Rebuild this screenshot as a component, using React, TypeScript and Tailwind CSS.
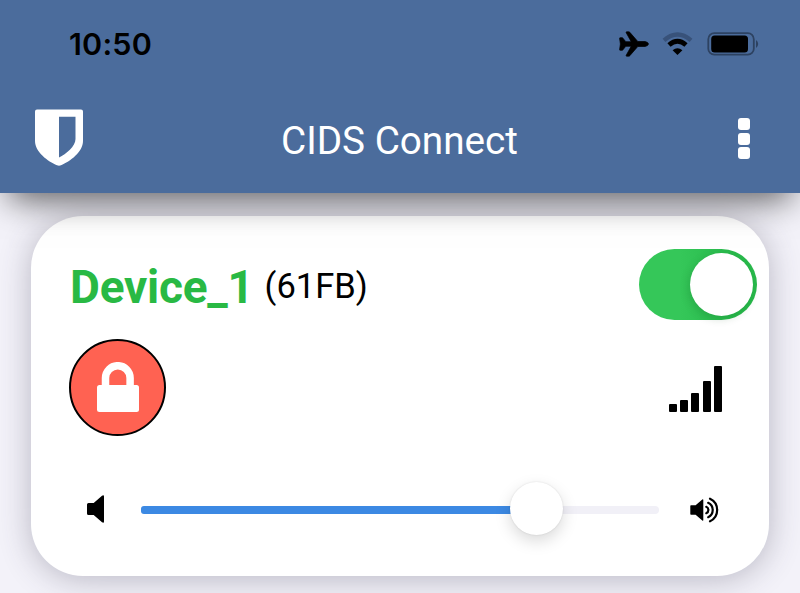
import React from "react";

function StatusBar() {
  return (
    <div className="flex h-[88px] items-center justify-between pl-[69px] pr-[41px]">
      <span className="font-['Inter',sans-serif] text-[30.5px] font-semibold leading-none tracking-[0.2px] text-black">10:50</span>
      <div className="flex items-center">
        <svg width="30" height="26" viewBox="0 0 30 26">
          <path d="M1.200 6.700h2.300l3.300 4h5.400L7.200 1.700Q6.800.8 7.700.8h2.100q.6 0 1 .5l8 9.200h7.200q3.300.6 3.500 2.500-.2 1.900-3.500 2.500h-7.200l-8 9.200q-.4.5-1 .5H7.700q-.9 0-.5-.9l5-9h-5.400l-3.300 4H1.200q-.7 0-.6-.7L1.400 13 .6 7.400q-.1-.7.600-.7z" stroke="#000" strokeWidth="0.7" strokeLinejoin="round" />
        </svg>
        <svg className="ml-[13px]" width="31" height="24" viewBox="0 0 31 24">
          <path d="M2 8.300Q15.500-3.300 29 8.300" fill="none" stroke="#38527a" strokeWidth="4.300" />
          <path d="M7 13Q15.500 5.600 24 13" fill="none" stroke="#000" strokeWidth="4.800" />
          <path d="M15.500 23l-4.900-4.700q4.900-4.200 9.800 0z" />
        </svg>
        <svg className="ml-[14px]" width="52" height="24" viewBox="0 0 52 24">
          <rect x="1.300" y="1.200" width="45.500" height="21.500" rx="6" fill="none" stroke="#2d4261" strokeWidth="1.800" />
          <rect x="4.200" y="3.600" width="36.800" height="16.800" rx="3.500" />
          <path d="M49 8q2.200 1.400 2.200 4T49 16z" fill="#2d4261" />
        </svg>
      </div>
    </div>
  );
}

function Header() {
  return (
    <header className="relative z-10 h-[193px] bg-[#4b6c9c] shadow-[0_16px_32px_-9px_rgba(0,0,0,0.62)]">
      <StatusBar />
      <div className="grid h-[99px] grid-cols-[1fr_auto_1fr] items-center pl-[35px] pr-[50px]">
        <svg width="48" height="57" viewBox="0 0 48 57">
          <path
            fill="#fff"
            fillRule="evenodd"
            d="M2 0.500h44q2 0 2 2v29.500c0 11-13 20.500-22 24.300q-2 .8-4 0C13 52.500 0 43 0 32V2.500Q0 .5 2 .5zM24 7.800v40.700C31 45 40.500 37.500 40.500 30V7.800z"
          />
        </svg>
        <h1 className="mr-[-14px] mt-[8px] font-['Roboto',sans-serif] text-[38.7px] leading-none text-white">CIDS Connect</h1>
        <div className="mt-[2px] flex w-3 flex-col items-center gap-[2.500px] justify-self-end">
          <span className="h-[12px] w-3 shrink-0 rounded-[3px] bg-white" />
          <span className="h-[12px] w-3 shrink-0 rounded-[3px] bg-white" />
          <span className="h-[12px] w-3 shrink-0 rounded-[3px] bg-white" />
        </div>
      </div>
    </header>
  );
}

function VolumeSlider() {
  return (
    <div className="mt-[46px] flex h-[54px] items-center pl-[55px]">
      <svg className="mt-[2px]" width="19" height="28" viewBox="0 0 19 28">
        <path d="M2.500 8h5.200L16 .7q2-1.200 2 .8v25q0 2-2 .8L7.700 20H2.500Q1 20 1 18.500v-9Q1 8 2.500 8z" />
      </svg>
      <div className="relative ml-[36px] mt-[3px] flex h-2 w-[518px] overflow-visible rounded-full bg-[#f1f0f7]">
        <div className="h-2 w-[396px] rounded-l-[3px] bg-[#3c89e3]" />
        <div className="absolute left-[369px] top-[-24px] h-[53px] w-[53px] rounded-full bg-white shadow-[0_6px_16px_rgba(0,0,0,0.15),0_0_2px_rgba(0,0,0,0.12)]" />
      </div>
      <svg className="ml-[31px] mt-[3px]" width="30" height="26" viewBox="0 0 30 26">
        <path d="M1 8.300h4.600l6.700-5.800q1-.6 1 .5v20q0 1.100-1 .5l-6.700-5.800H1q-.7 0-.7-.7V9q0-.7.7-.7z" />
        <g fill="none" stroke="#000" strokeWidth="2.200" strokeLinecap="round">
          <path d="M16.300 9.800a3.500 3.500 0 0 1 0 6.400" />
          <path d="M18.200 5.800a8 8 0 0 1 0 14.400" />
          <path d="M20 1.700a12.500 12.500 0 0 1 0 22.600" />
        </g>
      </svg>
    </div>
  );
}

function DeviceCard() {
  return (
    <section className="mx-[31px] mt-[23px] h-[360px] rounded-[52px] bg-white pt-[33px] shadow-[0_3px_32px_rgba(60,55,80,0.32)]">
      <div className="flex h-[71px] items-center justify-between pl-[39px] pr-3">
        <div className="flex items-start pt-[4px] font-['Roboto',sans-serif]">
          <span className="text-[46px] font-bold leading-[46px] tracking-[-0.25px] text-[#29b944]">Device_1</span>
          <span className="ml-[11px] mt-[4px] text-[34.500px] leading-[36px] text-black">(61FB)</span>
        </div>
        <div className="flex h-[71px] w-[118px] items-center justify-end rounded-full bg-[#35c759] bg-[linear-gradient(90deg,#35c759_35%,#28b94b_80%)] pr-1">
          <div className="h-[63px] w-[63px] rounded-full bg-white shadow-[-2px_3px_9px_rgba(0,70,20,0.18)]" />
        </div>
      </div>
      <div className="mt-[19px] flex h-[96px] items-center justify-between pl-[38px] pr-[47px]">
        <div className="flex h-[97px] w-[97px] items-center justify-center rounded-full border-2 border-black bg-[#ff6252]">
          <svg width="42" height="50" viewBox="0 0 42 50">
            <path d="M8.500 26V16a12.300 12.300 0 0 1 24.600 0v10" fill="none" stroke="#fff" strokeWidth="7.500" />
            <rect y="23" width="42" height="27" rx="2.500" fill="#fff" />
          </svg>
        </div>
        <div className="mt-1 flex h-[46px] items-end gap-[3.300px]">
          <span className="h-2 w-2 rounded-[1px] bg-black" />
          <span className="h-[12px] w-2 rounded-[1px] bg-black" />
          <span className="h-[19px] w-2 rounded-[1px] bg-black" />
          <span className="h-[31px] w-2 rounded-[1px] bg-black" />
          <span className="h-[46px] w-2 rounded-[1px] bg-black" />
        </div>
      </div>
      <VolumeSlider />
    </section>
  );
}

export default function App() {
  return (
    <main className="h-[593px] w-[800px] overflow-hidden bg-[#f3f2f9]">
      <Header />
      <DeviceCard />
    </main>
  );
}
